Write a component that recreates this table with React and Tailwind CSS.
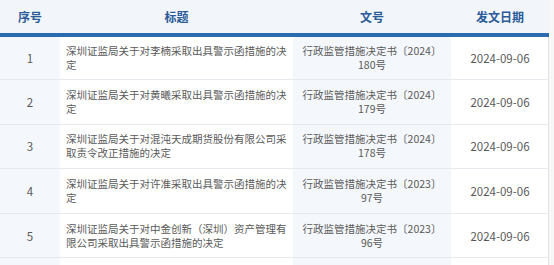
import React from 'react';

const rows = [
  { no: 1, title: '深圳证监局关于对李楠采取出具警示函措施的决定', doc: '行政监管措施决定书〔2024〕180号', date: '2024-09-06' },
  { no: 2, title: '深圳证监局关于对黄曦采取出具警示函措施的决定', doc: '行政监管措施决定书〔2024〕179号', date: '2024-09-06' },
  { no: 3, title: '深圳证监局关于对混沌天成期货股份有限公司采取责令改正措施的决定', doc: '行政监管措施决定书〔2024〕178号', date: '2024-09-06' },
  { no: 4, title: '深圳证监局关于对许准采取出具警示函措施的决定', doc: '行政监管措施决定书〔2023〕97号', date: '2024-09-06' },
  { no: 5, title: '深圳证监局关于对中金创新（深圳）资产管理有限公司采取出具警示函措施的决定', doc: '行政监管措施决定书〔2023〕96号', date: '2024-09-06' },
];

export default function App() {
  return (
    <div
      className="flex h-[265px] w-[554px] overflow-hidden bg-[#f7f7f7]"
      style={{ fontFamily: '"Noto Sans CJK SC", "Noto Sans", sans-serif' }}
    >
      <div className="w-[549px] shrink-0 border-r border-[#e3e3e3] bg-white">
        <table className="w-[549px] table-fixed border-collapse">
          <colgroup>
            <col className="w-[60px]" />
            <col className="w-[233px]" />
            <col className="w-[158px]" />
            <col className="w-[98px]" />
          </colgroup>
          <thead>
            <tr className="h-[35px] border-b-4 border-[#2b6cb1] bg-[#f2f5fa] text-[12px] font-bold text-[#2b5b98]">
              <th className="text-center font-bold">序号</th>
              <th className="text-center font-bold">标题</th>
              <th className="text-center font-bold">文号</th>
              <th className="text-center font-bold">发文日期</th>
            </tr>
          </thead>
          <tbody className="text-[10.5px] leading-[14px] text-[#5a5a5a]">
            {rows.map((r) => (
              <tr key={r.no} className="h-[44.6px] border-b border-[#e6e9ed]">
                <td className="bg-[#f4f7fb] text-center text-[11.5px]">{r.no}</td>
                <td className="px-[6px] text-left">{r.title}</td>
                <td className="bg-[#f4f7fb] px-[6px] text-center">{r.doc}</td>
                <td className="text-center text-[11.5px]">{r.date}</td>
              </tr>
            ))}
            <tr className="h-[44.6px]">
              <td className="bg-[#f4f7fb]"></td>
              <td></td>
              <td className="bg-[#f4f7fb]"></td>
              <td></td>
            </tr>
          </tbody>
        </table>
      </div>
    </div>
  );
}
